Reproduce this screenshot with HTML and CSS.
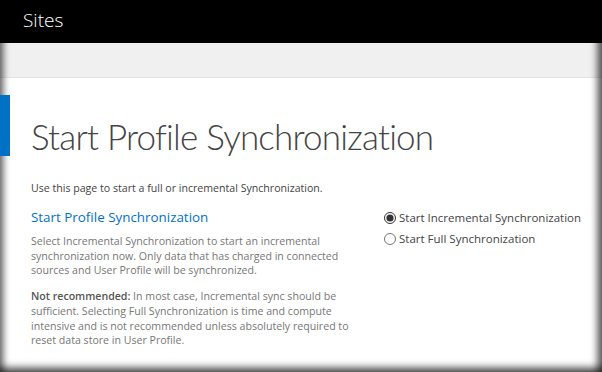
FILE: index.html
```
<!DOCTYPE html>
<html lang="en">
<head>
  <meta charset="UTF-8">
  <title>Start Profile Synchronization</title>
  <link rel="stylesheet" href="styles.css">
</head>
<body>
  <div class="frame">
    <div class="topbar">
      <span class="brand">Sites</span>
    </div>
    <div class="ribbon"></div>

    <div class="page-head">
      <div class="accent"></div>
      <h1 class="page-title">Start Profile Synchronization</h1>
    </div>

    <p class="intro">Use this page to start a full or incremental Synchronization.</p>

    <div class="section">
      <div class="section-info">
        <h2 class="section-title">Start Profile Synchronization</h2>
        <p class="section-text">Select Incremental Synchronization to start an incremental synchronization now. Only data that has charged in connected sources and User Profile will be synchronized.</p>
        <p class="section-text"><strong>Not recommended:</strong> In most case, Incremental sync should be sufficient. Selecting Full Synchronization is time and compute<br>intensive and is not recommended unless absolutely required to reset data store in User Profile.</p>
      </div>
      <div class="section-options">
        <label class="radio"><input type="radio" name="sync" checked> Start Incremental Synchronization</label>
        <label class="radio"><input type="radio" name="sync"> Start Full Synchronization</label>
      </div>
    </div>
  </div>
</body>
</html>
```

FILE: styles.css
```
* {
  box-sizing: border-box;
  margin: 0;
  padding: 0;
}

:root {
  --blue: #0072c6;
  --text: #444;
  --muted: #777;
  --font: "Open Sans", "Noto Sans", Arial, sans-serif;
}

html, body {
  height: 100%;
}

body {
  font-family: var(--font);
  color: var(--text);
  background: #fff;
  overflow: hidden;
}

.frame {
  position: relative;
  height: 372px;
}

/* dark vignette round the captured window */
.frame::after {
  content: "";
  position: absolute;
  inset: 0;
  pointer-events: none;
  box-shadow: inset 7px 0 6px -3px rgba(0,0,0,0.5),
              inset -8px 0 7px -3px rgba(0,0,0,0.6),
              inset 0 -8px 7px -3px rgba(0,0,0,0.6);
}

/* Top bar */
.topbar {
  height: 43px;
  background: #000;
  padding-left: 23px;
  display: flex;
  align-items: center;
}

.brand {
  color: #fff;
  font-size: 19px;
  font-weight: 300;
  margin-top: -3px;
}

.ribbon {
  height: 35px;
  background: #f0f0f0;
  border-bottom: 1px solid #e4e4e4;
}

/* Page heading */
.page-head {
  display: flex;
  padding-top: 17px;
  height: 100px;
}

.accent {
  width: 10px;
  height: 61px;
  background: var(--blue);
  position: relative;
  z-index: 1;
}

.page-title {
  margin-left: 21px;
  margin-top: 19px;
  font-family: "Lato", var(--font);
  font-size: 35px;
  font-weight: 300;
  letter-spacing: -0.8px;
  line-height: 44px;
  color: #444;
}

.intro {
  padding-left: 31px;
  margin-top: 3px;
  font-size: 10.6px;
  line-height: 14px;
}

/* Section */
.section {
  display: grid;
  grid-template-columns: 371px 1fr;
  margin-top: 13px;
}

.section-info {
  padding-left: 31px;
}

.section-title {
  font-size: 13.4px;
  font-weight: 500;
  color: var(--blue);
  line-height: 18px;
  margin-bottom: 8px;
}

.section-text {
  font-size: 10.6px;
  line-height: 14.7px;
  color: var(--muted);
  margin-bottom: 11px;
}

.section-text strong {
  font-weight: 600;
  color: #555;
}

.section-options {
  display: flex;
  flex-direction: column;
  gap: 5px;
  padding-left: 12px;
  padding-top: 2px;
}

.radio {
  display: flex;
  align-items: center;
  font-size: 11.5px;
  line-height: 16px;
  color: var(--text);
}

.radio input {
  width: 12px;
  height: 12px;
  margin: 0 3px 0 1px;
  accent-color: #333;
}
```
